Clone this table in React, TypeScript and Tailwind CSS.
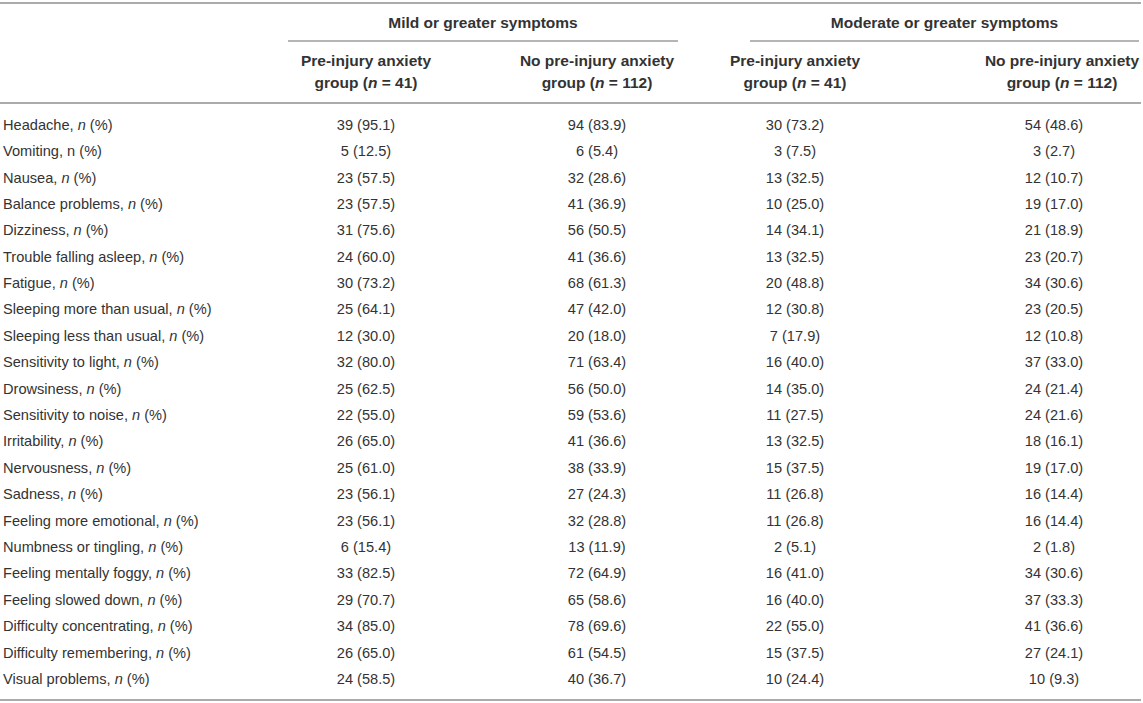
import React from "react";

type Row = { label: string; italic: boolean; v: [string, string, string, string] };

const rows: Row[] = [
  { label: "Headache", italic: true, v: ["39 (95.1)", "94 (83.9)", "30 (73.2)", "54 (48.6)"] },
  { label: "Vomiting", italic: false, v: ["5 (12.5)", "6 (5.4)", "3 (7.5)", "3 (2.7)"] },
  { label: "Nausea", italic: true, v: ["23 (57.5)", "32 (28.6)", "13 (32.5)", "12 (10.7)"] },
  { label: "Balance problems", italic: true, v: ["23 (57.5)", "41 (36.9)", "10 (25.0)", "19 (17.0)"] },
  { label: "Dizziness", italic: true, v: ["31 (75.6)", "56 (50.5)", "14 (34.1)", "21 (18.9)"] },
  { label: "Trouble falling asleep", italic: true, v: ["24 (60.0)", "41 (36.6)", "13 (32.5)", "23 (20.7)"] },
  { label: "Fatigue", italic: true, v: ["30 (73.2)", "68 (61.3)", "20 (48.8)", "34 (30.6)"] },
  { label: "Sleeping more than usual", italic: true, v: ["25 (64.1)", "47 (42.0)", "12 (30.8)", "23 (20.5)"] },
  { label: "Sleeping less than usual", italic: true, v: ["12 (30.0)", "20 (18.0)", "7 (17.9)", "12 (10.8)"] },
  { label: "Sensitivity to light", italic: true, v: ["32 (80.0)", "71 (63.4)", "16 (40.0)", "37 (33.0)"] },
  { label: "Drowsiness", italic: true, v: ["25 (62.5)", "56 (50.0)", "14 (35.0)", "24 (21.4)"] },
  { label: "Sensitivity to noise", italic: true, v: ["22 (55.0)", "59 (53.6)", "11 (27.5)", "24 (21.6)"] },
  { label: "Irritability", italic: true, v: ["26 (65.0)", "41 (36.6)", "13 (32.5)", "18 (16.1)"] },
  { label: "Nervousness", italic: true, v: ["25 (61.0)", "38 (33.9)", "15 (37.5)", "19 (17.0)"] },
  { label: "Sadness", italic: true, v: ["23 (56.1)", "27 (24.3)", "11 (26.8)", "16 (14.4)"] },
  { label: "Feeling more emotional", italic: true, v: ["23 (56.1)", "32 (28.8)", "11 (26.8)", "16 (14.4)"] },
  { label: "Numbness or tingling", italic: true, v: ["6 (15.4)", "13 (11.9)", "2 (5.1)", "2 (1.8)"] },
  { label: "Feeling mentally foggy", italic: true, v: ["33 (82.5)", "72 (64.9)", "16 (41.0)", "34 (30.6)"] },
  { label: "Feeling slowed down", italic: true, v: ["29 (70.7)", "65 (58.6)", "16 (40.0)", "37 (33.3)"] },
  { label: "Difficulty concentrating", italic: true, v: ["34 (85.0)", "78 (69.6)", "22 (55.0)", "41 (36.6)"] },
  { label: "Difficulty remembering", italic: true, v: ["26 (65.0)", "61 (54.5)", "15 (37.5)", "27 (24.1)"] },
  { label: "Visual problems", italic: true, v: ["24 (58.5)", "40 (36.7)", "10 (24.4)", "10 (9.3)"] },
];

const grid = "grid grid-cols-[250px_232px_230px_166px_89px_174px]";

function HeadCell({ text }: { text: string }) {
  return (
    <div className="text-center font-bold text-[15.5px] leading-[22px] whitespace-nowrap">
      <div>{text}</div>
      <div>
        group (<span className="italic">n</span> = {text.startsWith("No") ? "112" : "41"})
      </div>
    </div>
  );
}

export default function App() {
  return (
    <div
      className="w-[1143px] h-[703px] bg-white text-[#333333] pt-[2px]"
      style={{ fontFamily: '"Liberation Sans", Arial, Helvetica, sans-serif' }}
    >
      <div className="w-[1141px]">
        <div className="h-[2px] bg-[#ababab]" />
        {/* group headers */}
        <div className={`${grid} pt-[9px]`}>
          <div />
          <div className="col-span-2 pl-[38px] pr-[34px]">
            <div className="text-center font-bold text-[15.5px] leading-[20px] pb-[7px]">
              Mild or greater symptoms
            </div>
            <div className="h-[1.5px] bg-[#b5b5b5]" />
          </div>
          <div className="col-span-3 pl-[38px] pr-[2px]">
            <div className="text-center font-bold text-[15.5px] leading-[20px] pb-[7px]">
              Moderate or greater symptoms
            </div>
            <div className="h-[1.5px] bg-[#b5b5b5]" />
          </div>
        </div>
        {/* column headers */}
        <div className={`${grid} pt-[8px] pb-[8px]`}>
          <div />
          <HeadCell text="Pre-injury anxiety" />
          <HeadCell text="No pre-injury anxiety" />
          <HeadCell text="Pre-injury anxiety" />
          <div className="col-span-2 pl-[105px]">
            <HeadCell text="No pre-injury anxiety" />
          </div>
        </div>
        <div className="h-[2px] bg-[#ababab]" />
        {/* body */}
        <div className="pt-[9px] pb-[6px] text-[14.6px]">
          {rows.map((r) => (
            <div key={r.label} className={`${grid} h-[26.4px] items-center`}>
              <div className="pl-[3px] whitespace-nowrap">
                {r.label}, {r.italic ? <span className="italic">n</span> : "n"} (%)
              </div>
              <div className="text-center">{r.v[0]}</div>
              <div className="text-center">{r.v[1]}</div>
              <div className="text-center">{r.v[2]}</div>
              <div />
              <div className="text-center">{r.v[3]}</div>
            </div>
          ))}
        </div>
        <div className="h-[2px] bg-[#ababab]" />
      </div>
    </div>
  );
}
